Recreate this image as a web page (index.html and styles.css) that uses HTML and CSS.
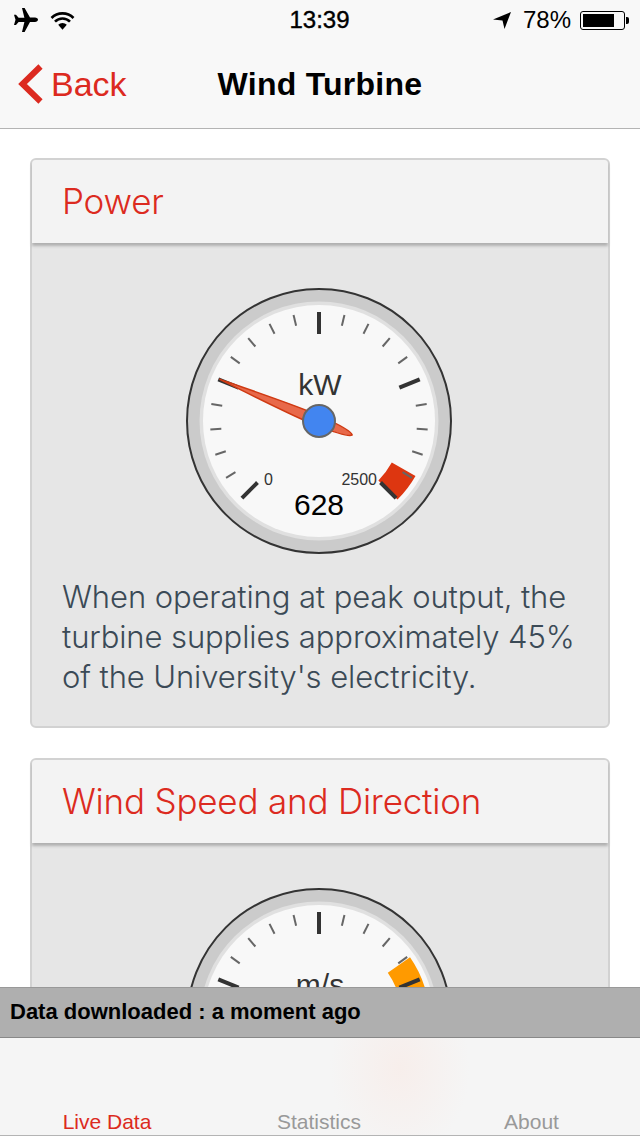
FILE: index.html
```html
<!DOCTYPE html>
<html lang="en">
<head>
  <meta charset="UTF-8" />
  <title>Wind Turbine</title>
  <link rel="stylesheet" href="styles.css">
</head>
<body>
  <svg class="defs" width="0" height="0">
    <defs>
      <g id="dial">
        <circle r="132" fill="#cbcbcb" stroke="#333" stroke-width="2" />
        <circle r="119.5" fill="#e0e0e0" />
        <circle r="116" fill="#f8f8f8" />
      </g>
      <line id="minor" y1="-109" y2="-98" stroke="#666" stroke-width="2" />
      <line id="major" y1="-109" y2="-87" stroke="#333" stroke-width="4" />
      <g id="ticks">
        <use href="#major" transform="rotate(-135)" />
        <use href="#minor" transform="rotate(-121.5)" />
        <use href="#minor" transform="rotate(-108)" />
        <use href="#minor" transform="rotate(-94.5)" />
        <use href="#minor" transform="rotate(-81)" />
        <use href="#major" transform="rotate(-67.5)" />
        <use href="#minor" transform="rotate(-54)" />
        <use href="#minor" transform="rotate(-40.5)" />
        <use href="#minor" transform="rotate(-27)" />
        <use href="#minor" transform="rotate(-13.5)" />
        <use href="#major" />
        <use href="#minor" transform="rotate(13.5)" />
        <use href="#minor" transform="rotate(27)" />
        <use href="#minor" transform="rotate(40.5)" />
        <use href="#minor" transform="rotate(54)" />
        <use href="#major" transform="rotate(67.5)" />
        <use href="#minor" transform="rotate(81)" />
        <use href="#minor" transform="rotate(94.5)" />
        <use href="#minor" transform="rotate(108)" />
        <use href="#minor" transform="rotate(121.5)" />
        <use href="#major" transform="rotate(135)" />
      </g>
    </defs>
  </svg>

  <header class="top">
    <div class="status">
      <div class="status-left">
        <svg width="26" height="24" viewBox="0 0 26 24"><path d="M10 0h2.600l5.400 9.600h5c1.600 0 3 1 3 2.200s-1.400 2.200-3 2.200h-5L12.600 24H10l2.400-10H6.600L4 17H2l1.500-5.200L2 6.700h2l2.600 3h5.800z" fill="#000"/></svg>
        <svg width="25" height="19" viewBox="0 0 25 19"><path d="M1.500 7a15.500 15.500 0 0 1 22 0M5 10.700a10.500 10.500 0 0 1 15 0" fill="none" stroke="#000" stroke-width="2.600"/><path d="M8.200 13.800a6 6 0 0 1 8.600 0l-4.300 5z" fill="#000"/></svg>
      </div>
      <div class="status-time">13:39</div>
      <div class="status-right">
        <svg width="18" height="17" viewBox="0 0 18 17"><path d="M18 0L11.500 17 9.500 8.500 0 7.500z" fill="#000"/></svg>
        <span class="battery-pct">78%</span>
        <div class="battery"><div class="battery-fill"></div></div>
        <div class="battery-nub"></div>
      </div>
    </div>
    <nav class="navbar">
      <a class="back">
        <svg width="26" height="40" viewBox="0 0 26 40"><path d="M22.500 2.500L4.500 20l18 17.500" fill="none" stroke="#dc2a20" stroke-width="6"/></svg>
        <span>Back</span>
      </a>
      <h1>Wind Turbine</h1>
    </nav>
  </header>

  <main class="content">
    <section class="card">
      <h2>Power</h2>
      <div class="card-body">
        <svg class="gauge" width="270" height="270" viewBox="0 0 270 270">
          <g transform="translate(134 135)">
            <use href="#dial" />
            <path d="M72.800 41.400 L96.500 54.900 A111 111 0 0 1 78.500 78.500 L59.400 59.400 A84 84 0 0 0 72.800 41.400z" fill="#dd3610" />
            <use href="#ticks" />
            <text class="unit" x="1" y="-26">kW</text>
            <text class="limit" x="-55" y="64">0</text>
            <text class="limit limit-end" x="58" y="64">2500</text>
            <text class="value" y="94">628</text>
            <g transform="rotate(-67.2)">
              <path d="M0 -108 C3 -60 6 -20 5 0 C4.500 18 3 34 0 36 C-3 34 -4.500 18 -5 0 C-6 -20 -3 -60 0 -108z" fill="#e8694a" stroke="#cf3a13" stroke-width="1.500" />
            </g>
            <circle r="16" fill="#4285f0" stroke="#666" stroke-width="2" />
          </g>
        </svg>
        <p>When operating at peak output, the turbine supplies approximately 45% of the University's electricity.</p>
      </div>
    </section>

    <section class="card">
      <h2>Wind Speed and Direction</h2>
      <div class="card-body">
        <svg class="gauge" width="270" height="270" viewBox="0 0 270 270">
          <g transform="translate(134 135)">
            <use href="#dial" />
            <path d="M68.800 -48.200 L91 -63.700 A111 111 0 0 1 106 -33 L80 -25 A84 84 0 0 0 68.800 -48.200z" fill="#ff9a00" />
            <use href="#ticks" />
            <text class="unit" x="1" y="-26">m/s</text>
          </g>
        </svg>
      </div>
    </section>
  </main>

  <div class="updated">Data downloaded : a moment ago</div>

  <footer class="tabs">
    <a class="tab tab-active">Live Data</a>
    <a class="tab">Statistics</a>
    <a class="tab">About</a>
  </footer>
</body>
</html>
```

FILE: styles.css
```css
html, body {
  margin: 0;
  height: 100%;
}

body {
  width: 640px;
  height: 1136px;
  display: flex;
  flex-direction: column;
  overflow: hidden;
  background: white;
  font-family: "Liberation Sans", Arial, sans-serif;
}

.defs {
  display: block;
  height: 0;
}

.top {
  background: #f8f8f8;
  border-bottom: 1px solid #b4b4b4;
}

.status {
  height: 40px;
  display: flex;
  align-items: center;
  justify-content: space-between;
  padding: 0 11px 0 12px;
}

.status-left, .status-right {
  width: 140px;
  display: flex;
  align-items: center;
}

.status-left {
  gap: 12px;
}

.status-right {
  justify-content: flex-end;
}

.status-time {
  font-size: 24px;
  -webkit-text-stroke: 0.4px #000;
  margin-right: 2px;
}

.battery-pct {
  font-size: 24px;
  margin: 0 9px 0 12px;
}

.battery {
  width: 45px;
  height: 19px;
  box-sizing: border-box;
  border: 1px solid #000;
  border-radius: 3px;
  padding: 2px;
  margin-right: 1px;
}

.battery-fill {
  width: 31px;
  height: 13px;
  background: #000;
}

.battery-nub {
  width: 3px;
  height: 7px;
  background: #000;
  border-radius: 0 2px 2px 0;
}

.navbar {
  height: 88px;
  display: flex;
  align-items: center;
  padding-left: 18px;
}

.back {
  display: flex;
  align-items: center;
  gap: 7px;
  color: #dc2a20;
  font-size: 34px;
}

.navbar h1 {
  margin: 0 0 0 91px;
  font-size: 32px;
  letter-spacing: 0.25px;
  font-weight: bold;
  color: #000;
}

.content {
  flex: 1;
  min-height: 0;
  overflow: hidden;
  padding: 29px 30px 0;
}

.card {
  border: 2px solid #d2d2d2;
  border-radius: 6px;
  margin-bottom: 30px;
  background: #e6e6e6;
}

.card h2 {
  margin: 0;
  height: 83px;
  line-height: 82px;
  padding-left: 30px;
  background: #f3f3f3;
  border-radius: 4px 4px 0 0;
  box-shadow: 0 3px 3px #b0b0b0;
  color: #dc2a20;
  font-family: Inter, sans-serif;
  font-weight: 300;
  font-size: 35px;
  letter-spacing: -0.2px;
}

.card-body {
  padding: 43px 30px 29px;
}

.gauge {
  display: block;
  margin: 0 auto 21px;
}

.gauge text {
  font-family: "Liberation Sans", Arial, sans-serif;
}

.unit {
  font-size: 30px;
  text-anchor: middle;
  fill: #333;
}

.limit {
  font-size: 16px;
  fill: #333;
  text-anchor: start;
}

.limit-end {
  text-anchor: end;
}

.value {
  font-size: 30px;
  text-anchor: middle;
  fill: #000;
}

.card p {
  margin: 0;
  font-family: Inter, sans-serif;
  font-weight: 300;
  font-size: 31px;
  letter-spacing: -0.1px;
  line-height: 40px;
  color: #3b4a56;
}

.updated {
  height: 49px;
  line-height: 47px;
  padding-left: 10px;
  background: #afafaf;
  border-top: 1px solid #999;
  border-bottom: 1px solid #888;
  font-size: 22px;
  font-weight: bold;
  color: #000;
}

.tabs {
  height: 98px;
  box-sizing: border-box;
  display: grid;
  grid-template-columns: 214px 210px 215px;
  align-items: end;
  border-bottom: 1px solid #b4b4b4;
  background: radial-gradient(ellipse 70px 90px at 400px 30px, #f7eeeb, rgba(247, 238, 235, 0)), #f5f5f5;
}

.tab {
  text-align: center;
  font-size: 21px;
  line-height: 26px;
  color: #999;
}

.tab-active {
  color: #dc2a20;
}
```
